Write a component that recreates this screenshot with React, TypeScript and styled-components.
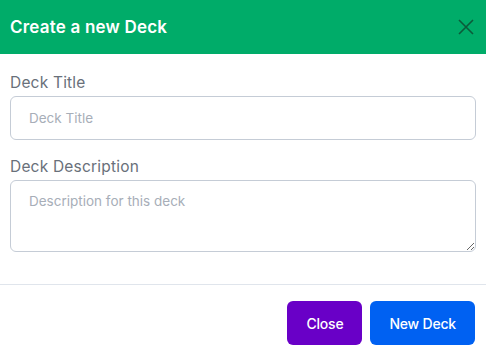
import React from 'react';
import styled, { createGlobalStyle } from 'styled-components';

const Global = createGlobalStyle`
  * { box-sizing: border-box; }
  body {
    margin: 0;
    background: #fff;
    font-family: Inter, "Noto Sans", sans-serif;
  }
`;

const Modal = styled.div`
  width: 486px;
  height: 354px;
  background: #fff;
  display: flex;
  flex-direction: column;
`;

const Header = styled.div`
  height: 54px;
  background: #00ac69;
  display: flex;
  align-items: center;
  justify-content: space-between;
  padding: 0 11px 0 10px;
`;

const Title = styled.h5`
  margin: 0;
  color: #fff;
  font-size: 17px;
  font-weight: 600;
  letter-spacing: 0.2px;
`;

const CloseIcon = styled.button`
  border: 0;
  background: none;
  padding: 0;
  width: 18px;
  height: 18px;
  display: flex;
  cursor: pointer;
`;

const Body = styled.div`
  padding: 20px 10px 0;
  display: flex;
  flex-direction: column;
`;

const Group = styled.div`
  display: flex;
  flex-direction: column;
  margin-bottom: 18px;
`;

const Label = styled.label`
  color: #69707a;
  font-size: 15.5px;
  line-height: 18px;
  margin-bottom: 4px;
  letter-spacing: 0.2px;
`;

const fieldStyles = `
  width: 100%;
  border: 1px solid #c5ccd6;
  border-radius: 6px;
  font-family: Inter, "Noto Sans", sans-serif;
  font-size: 13.5px;
  color: #69707a;
  padding: 0 18px;
  background: #fff;
  &::placeholder { color: #a7aeb8; }
`;

const Input = styled.input`
  ${fieldStyles}
  height: 44px;
`;

const TextArea = styled.textarea`
  ${fieldStyles}
  height: 72px;
  padding-top: 12px;
  resize: vertical;
`;

const Footer = styled.div`
  margin-top: auto;
  border-top: 1px solid #e0e5ec;
  display: flex;
  justify-content: flex-end;
  gap: 8px;
  padding: 16px 11px 9px;
`;

const Button = styled.button<{ $bg: string }>`
  height: 44px;
  padding: 0 19px;
  border: 0;
  border-radius: 6px;
  background: ${p => p.$bg};
  color: #fff;
  font-family: Inter, "Noto Sans", sans-serif;
  font-size: 14px;
  font-weight: 500;
  letter-spacing: -0.2px;
  cursor: pointer;
`;

export default function App() {
  return (
    <>
      <Global />
      <Modal>
        <Header>
          <Title>Create a new Deck</Title>
          <CloseIcon aria-label="Close">
            <svg width="18" height="18" viewBox="0 0 18 18">
              <path d="M2 2 L16 16 M16 2 L2 16" stroke="#0b5b3a" strokeWidth="1.6" />
            </svg>
          </CloseIcon>
        </Header>
        <Body>
          <Group>
            <Label>Deck Title</Label>
            <Input placeholder="Deck Title" />
          </Group>
          <Group>
            <Label>Deck Description</Label>
            <TextArea placeholder="Description for this deck" />
          </Group>
        </Body>
        <Footer>
          <Button $bg="#6900c7">Close</Button>
          <Button $bg="#0061f2">New Deck</Button>
        </Footer>
      </Modal>
    </>
  );
}
